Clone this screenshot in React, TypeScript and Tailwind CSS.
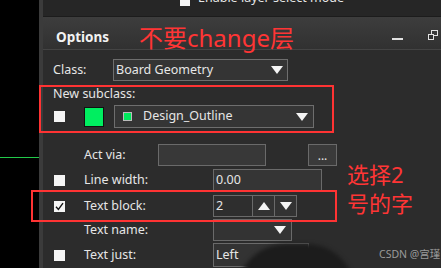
import React from "react"

const font = { fontFamily: '"Noto Sans", "Noto Sans CJK SC", sans-serif' }

function Tri({ up = false }: { up?: boolean }) {
  return (
    <svg width="12" height="8" viewBox="0 0 12 8" className="block">
      <polygon points={up ? "0,8 12,8 6,0" : "0,0 12,0 6,8"} fill="#f4f4f4" />
    </svg>
  )
}

function Check({ checked = false }: { checked?: boolean }) {
  return (
    <div className="w-[11px] h-[11px] bg-[#f5f5f5] flex items-center justify-center">
      {checked && (
        <svg width="9" height="9" viewBox="0 0 9 9">
          <path d="M1 4.8 L3.4 7.4 L8 1.2" stroke="#111" strokeWidth="1.4" fill="none" />
        </svg>
      )}
    </div>
  )
}

export default function App() {
  return (
    <div
      className="relative w-[441px] h-[268px] overflow-hidden bg-black flex text-[12.5px] text-[#e6e6e6]"
      style={font}
    >
      {/* canvas edge */}
      <div className="w-[39px] shrink-0">
        <div className="mt-[157px] h-px bg-[#22c94a]" />
      </div>
      <div className="w-[4px] shrink-0 bg-[#3b3b3b]" />

      <div className="flex-1 flex flex-col bg-[#2c2c2c]">
        {/* top section, cut off */}
        <div className="h-[17px] bg-[#262626] border-b border-[#1c1c1c] flex items-start">
          <div className="ml-[137px] -mt-[4px] w-[10px] h-[10px] bg-[#f5f5f5]" />
          <span className="ml-[8px] -mt-[11px] leading-[18px] whitespace-nowrap">Enable layer select mode</span>
        </div>

        {/* header */}
        <div className="h-[33px] bg-gradient-to-b from-[#3d3d3d] to-[#313131] border-b border-[#444] flex items-center">
          <span className="ml-[13px] mt-[8px] font-bold text-[13.5px] text-[#f2f2f2]">Options</span>
          <div className="ml-auto mt-[12px] mr-[25px] w-[11px] h-[2px] bg-[#e0e0e0]" />
          <svg width="10" height="10" viewBox="0 0 10 10" className="mr-[3px] mt-[4px]">
            <rect x="3.5" y="0.5" width="6" height="5" fill="none" stroke="#e0e0e0" />
            <rect x="0.5" y="4.5" width="5" height="5" fill="#313131" stroke="#e0e0e0" />
          </svg>
        </div>

        {/* body */}
        <div className="flex flex-col">
          <div className="mt-[9px] flex items-center h-[22px]">
            <span className="ml-[10px] w-[60px]">Class:</span>
            <div className="w-[175px] h-[22px] border border-[#6e6e6e] bg-[#343434] flex items-center">
              <span className="ml-[2px] flex-1">Board Geometry</span>
              <span className="mr-[4px]"><Tri /></span>
            </div>
          </div>

          <div className="mt-[5px] h-[17px] flex items-center">
            <span className="ml-[10px]">New subclass:</span>
          </div>

          <div className="mt-[2px] flex items-center h-[23px]">
            <div className="ml-[11px]"><Check /></div>
            <div className="ml-[19px] w-[20px] h-[20px] bg-[#00ee60] border-[1.5px] border-[#111]" />
            <div className="ml-[10px] w-[200px] h-[23px] border border-[#6e6e6e] bg-[#353535] flex items-center">
              <div className="ml-[8px] w-[9px] h-[9px] bg-[#00e85c] border border-[#bbb]" />
              <span className="ml-[11px] flex-1">Design_Outline</span>
              <span className="mr-[5px]"><Tri /></span>
            </div>
          </div>

          <div className="mt-[16px] flex items-center h-[22px]">
            <span className="ml-[41px] w-[74px]">Act via:</span>
            <div className="w-[108px] h-[22px] border border-[#6a6a6a] bg-[#383838]" />
            <div className="ml-[42px] w-[29px] h-[22px] border border-[#6a6a6a] bg-[#3a3a3a] flex items-center justify-center text-[12px] leading-none pt-[2px]">
              ...
            </div>
          </div>

          <div className="mt-[3px] flex items-center h-[22px]">
            <div className="ml-[11px]"><Check /></div>
            <span className="ml-[19px] w-[129px]">Line width:</span>
            <div className="w-[109px] h-[22px] border border-[#6a6a6a] bg-[#353535] flex items-center pl-[2px]">0.00</div>
          </div>

          <div className="mt-[4px] flex items-center h-[22px]">
            <div className="ml-[11px]"><Check checked /></div>
            <span className="ml-[19px] w-[129px]">Text block:</span>
            <div className="w-[40px] h-[22px] border border-[#6a6a6a] bg-[#2e2e2e] flex items-center pl-[2px]">2</div>
            <div className="w-[22px] h-[22px] border border-l-0 border-[#6a6a6a] bg-[#333] flex items-center justify-center"><Tri up /></div>
            <div className="w-[22px] h-[22px] border border-l-0 border-[#6a6a6a] bg-[#333] flex items-center justify-center"><Tri /></div>
          </div>

          <div className="mt-[2px] flex items-center h-[22px]">
            <span className="ml-[41px] w-[129px]">Text name:</span>
            <div className="w-[79px] h-[22px] border border-[#6a6a6a] bg-[#333] flex items-center justify-end pr-[5px]"><Tri /></div>
          </div>

          <div className="mt-[3px] flex items-center h-[22px]">
            <div className="ml-[11px]"><Check /></div>
            <span className="ml-[19px] w-[129px]">Text just:</span>
            <div className="w-[96px] h-[24px] border border-[#6a6a6a] bg-[#333] flex items-center pl-[2px]">Left</div>
          </div>
        </div>
      </div>

      {/* watermark avatar blob */}
      <div className="absolute left-[236px] top-[244px] w-[120px] h-[100px] rounded-full bg-[#1c1c1c] blur-[2px]" />
      <span className="absolute left-[379px] top-[247px] text-[10.5px] leading-[14px] whitespace-nowrap text-[#9a9a9a]">CSDN @宫瑾</span>

      {/* annotations */}
      <div className="absolute left-[39px] top-[85px] w-[295px] h-[48px] border-[2.5px] border-[#ff3333]" />
      <div className="absolute left-[31px] top-[190px] w-[306px] h-[32px] border-[2.5px] border-[#ff3333]" />
      <span className="absolute left-[139px] top-[22px] text-[24px] leading-[32px] text-[#ff3535] whitespace-nowrap">不要change层</span>
      <span className="absolute left-[347px] top-[159px] text-[22px] leading-[30px] text-[#ff3535] whitespace-nowrap">选择2</span>
      <span className="absolute left-[347px] top-[188px] text-[22px] leading-[30px] text-[#ff3535] whitespace-nowrap">号的字</span>
    </div>
  )
}
